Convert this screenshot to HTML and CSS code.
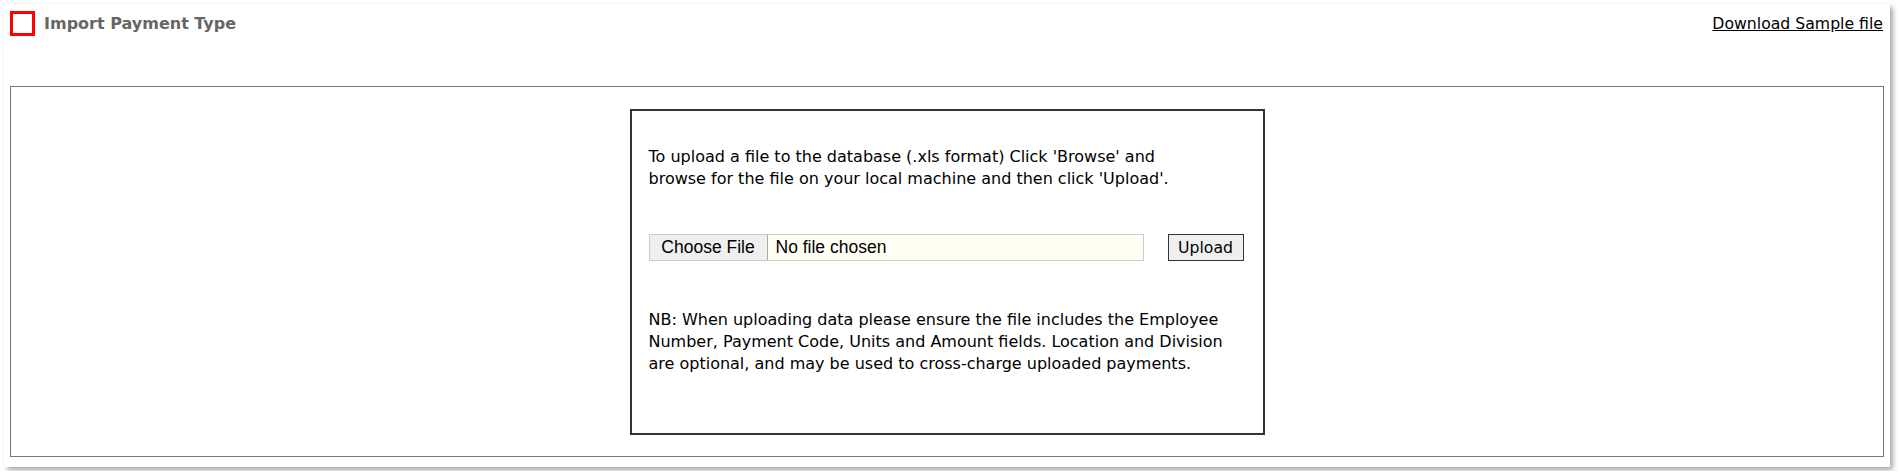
FILE: index.html
```html
<!DOCTYPE html>
<html>
<head>
    <title>Import Payment Type</title>
    <link rel="stylesheet" href="styles.css">
</head>
<body>
    <!-- the white card -->
    <div class="card">
        <div class="header">
            <span class="marker"></span>
            <span class="title">Import Payment Type</span>
            <a class="sample" href="#">Download Sample file</a>
        </div>

        <!-- the grey framed area with the upload box in the middle -->
        <div class="frame">
            <div class="upload">
                <p class="intro">To upload a file to the database (.xls format) Click 'Browse' and<br>
                    browse for the file on your local machine and then click 'Upload'.</p>
                <div class="row">
                    <input class="file" type="file">
                    <button class="btn" type="button">Upload</button>
                </div>
                <p class="note">NB: When uploading data please ensure the file includes the Employee<br>
                    Number, Payment Code, Units and Amount fields. Location and Division<br>
                    are optional, and may be used to cross-charge uploaded payments.</p>
            </div>
        </div>
    </div>
</body>
</html>
```

FILE: styles.css
```css
/* page */
body {
    margin: 0;
    padding: 0;
    background: white;
    font-family: "DejaVu Sans", Verdana, sans-serif;
}

/* the card with a shadow on right and bottom */
.card {
    box-sizing: border-box;
    width: 1886px;
    height: 463px;
    margin: 4px;
    padding: 7px 6px 10px 6px;
    background: white;
    box-shadow: 3px 3px 5px rgba(0,0,0,0.35);
    display: flex;
    flex-direction: column;
}

/* header: red square, title, link */
.header {
    display: flex;
    align-items: flex-start;
    height: 75px;
}
.marker {
    box-sizing: border-box;
    width: 25px;
    height: 25px;
    border: 3px solid red;
}
.title {
    margin-left: 9px;
    margin-top: 3px;
    font-size: 16px;
    font-weight: bold;
    color: #666;
}
.sample {
    margin-left: auto;
    margin-right: 1px;
    margin-top: 3px;
    font-size: 15.7px;
    color: black;
}

/* grey frame */
.frame {
    flex: 1;
    border: 1px solid #777;
    display: flex;
    justify-content: center;
    align-items: center;
}

/* the upload box */
.upload {
    box-sizing: border-box;
    width: 635px;
    height: 326px;
    border: 2px solid #333;
    padding: 35px 17px 0 17px;
    font-size: 16px;
    line-height: 22px;
    color: black;
    white-space: nowrap;
}
p { margin: 0; }

.row {
    display: flex;
    align-items: center;
    margin-top: 44px;
    margin-bottom: 48px;
}
.file {
    box-sizing: border-box;
    width: 495px;
    height: 27px;
    border: 1px solid #ccc;
    background: #fffff3;
    font-family: "Liberation Sans", Arial, sans-serif;
    font-size: 17.5px;
    padding: 0;
}
.file::file-selector-button {
    height: 25px;
    width: 118px;
    margin-right: 8px;
    border: none;
    border-right: 1px solid #aaa;
    border-radius: 2px 0 0 0;
    background: #efefef;
    font-family: "Liberation Sans", Arial, sans-serif;
    font-size: 17.5px;
    color: black;
}
.btn {
    box-sizing: border-box;
    margin-left: 24px;
    width: 76px;
    height: 27px;
    padding: 0;
    border: 1px solid #333;
    background: #efefef;
    font-family: "DejaVu Sans", Verdana, sans-serif;
    font-size: 15.7px;
    color: black;
}
```
